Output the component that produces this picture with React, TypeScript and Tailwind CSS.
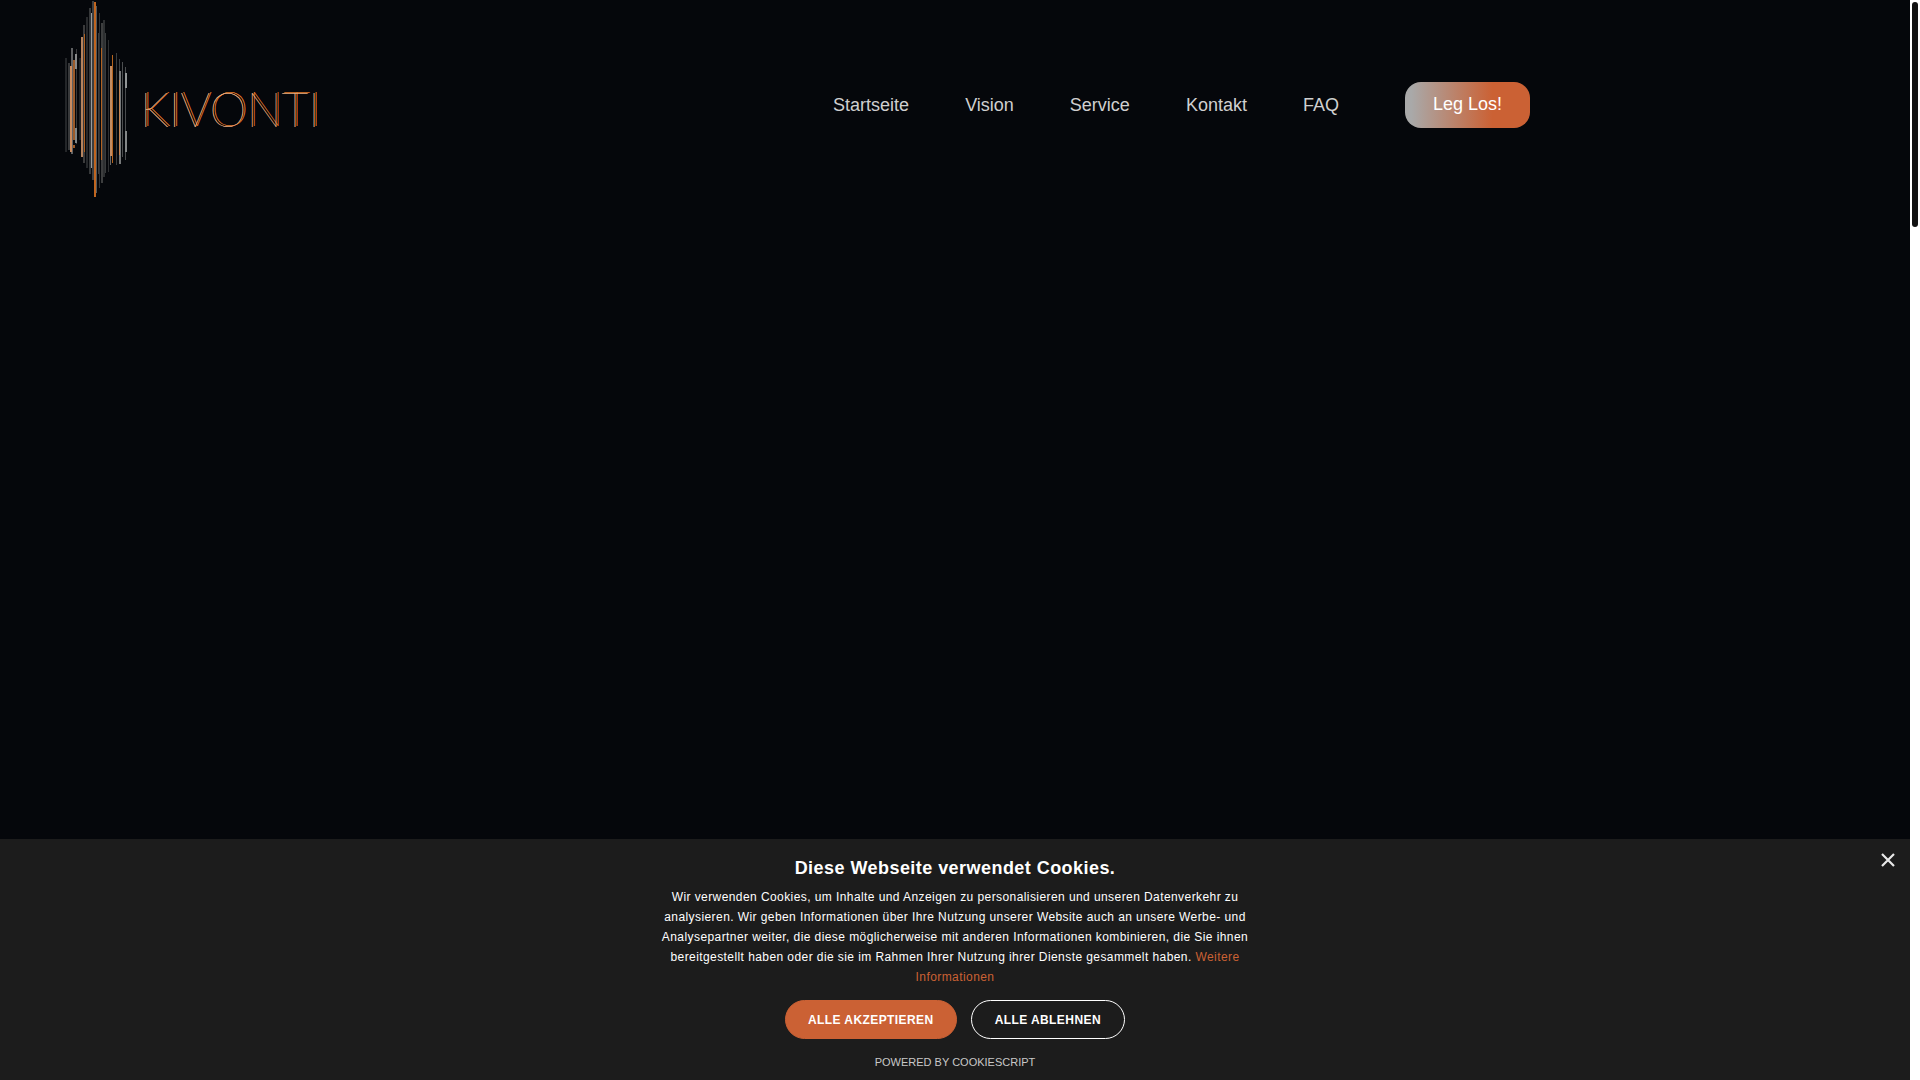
import React, { useState } from "react";

// x, top, bottom, width, color
const bars: [number, number, number, number, string][] = [
  [2, 58, 152, 2, "#242629"],
  [5, 63, 150, 2, "#38393b"],
  [8, 48, 154, 2, "#5f6062"],
  [7, 66, 152, 2, "#c88b60"],
  [10, 60, 140, 2, "#9c5b2a"],
  [10, 145, 148, 2, "#a05a24"],
  [13, 49, 144, 1, "#38393b"],
  [12, 54, 69, 2, "#88898a"],
  [12, 128, 143, 2, "#7f8587"],
  [16, 58, 140, 2, "#202225"],
  [20, 25, 163, 2, "#3b3b3c"],
  [18, 37, 157, 2, "#b5835e"],
  [21, 34, 152, 1, "#ad6020"],
  [23, 17, 168, 2, "#27292c"],
  [26, 8, 174, 2, "#36383a"],
  [28, 13, 168, 1, "#989b9c"],
  [29, 1, 180, 2, "#3c3e40"],
  [31, 2, 197, 2, "#c0651f"],
  [33, 6, 193, 1, "#55585a"],
  [36, 13, 188, 1, "#303234"],
  [35, 33, 174, 1, "#3b3d3f"],
  [38, 23, 183, 2, "#3d3e3f"],
  [38, 48, 160, 1, "#b26322"],
  [40, 20, 177, 2, "#2d2f31"],
  [42, 33, 173, 1, "#393b3c"],
  [45, 40, 172, 1, "#2d2f31"],
  [47, 66, 165, 1, "#68696a"],
  [47, 66, 156, 2, "#c28c63"],
  [49, 55, 163, 1, "#b5641f"],
  [53, 53, 165, 1, "#3a3c3e"],
  [56, 59, 155, 1, "#3d3f41"],
  [56, 71, 164, 2, "#77797a"],
  [56, 80, 155, 1, "#c58352"],
  [59, 62, 157, 1, "#4c4e50"],
  [62, 67, 160, 1, "#4a4c4e"],
  [62, 73, 88, 2, "#929596"],
  [62, 131, 152, 2, "#858889"],
];

const links = ["Startseite", "Vision", "Service", "Kontakt", "FAQ"];

const Logo: React.FC = () => {
  return (
    <a href="#" className="flex items-center gap-3">
      <svg className="w-16 h-50" viewBox="0 0 64 200" shapeRendering="crispEdges" aria-hidden="true">
        {bars.map(([x, top, bottom, width, color], i) => (
          <rect key={i} x={x - 1} y={top} width={width} height={bottom - top} fill={color} />
        ))}
      </svg>
      <span className="pt-[18px] font-['Lato',sans-serif] text-[47px] leading-none font-thin text-[#f0b48a] [text-shadow:0_0_0_#e0a072,2px_-1px_0_#e07a2a,2px_-1px_0_#e07a2a]">
        KIVONTI
      </span>
    </a>
  );
};

const Header: React.FC = () => {
  return (
    <header className="flex items-center justify-between pl-16 pr-[380px] h-50">
      <Logo />
      <nav className="flex items-center gap-14 pt-2.5 text-lg text-[#d0d0d0]">
        {links.map((link) => (
          <a key={link} href={`#${link.toLowerCase()}`} className="hover:text-white">
            {link}
          </a>
        ))}
        <button className="ml-2.5 px-7 pt-2 pb-2.5 rounded-2xl text-white bg-[linear-gradient(90deg,#a9a9a9_5%,#cb6134_70%)]">
          Leg Los!
        </button>
      </nav>
    </header>
  );
};

const CookieBanner: React.FC<{ onClose: () => void }> = ({ onClose }) => {
  return (
    <section className="relative mt-auto flex flex-col items-center px-6 pt-[15px] pb-2 bg-[#1c1c1c] text-center text-white">
      <button
        onClick={onClose}
        aria-label="Schließen"
        className="absolute top-3 right-[13px] p-0.5 text-[#e8e8e8]"
      >
        <svg className="size-[14px]" viewBox="0 0 14 14" stroke="currentColor" strokeWidth="2.2" aria-hidden="true">
          <path d="M1 1l12 12M13 1L1 13" />
        </svg>
      </button>
      <h2 className="text-lg leading-7 font-bold tracking-wide">Diese Webseite verwendet Cookies.</h2>
      <p className="mt-[5px] max-w-[600px] text-xs leading-5 tracking-[0.035em]">
        Wir verwenden Cookies, um Inhalte und Anzeigen zu personalisieren und unseren Datenverkehr zu
        analysieren. Wir geben Informationen über Ihre Nutzung unserer Website auch an unsere Werbe- und
        Analysepartner weiter, die diese möglicherweise mit anderen Informationen kombinieren, die Sie ihnen
        bereitgestellt haben oder die sie im Rahmen Ihrer Nutzung ihrer Dienste gesammelt haben.{" "}
        <a href="#datenschutz" className="text-[#cb6134]">
          Weitere Informationen
        </a>
      </p>
      <div className="mt-[13px] flex gap-3.5 text-xs font-bold tracking-[0.035em]">
        <button onClick={onClose} className="h-[39px] px-[22px] rounded-full border border-[#cb6134] bg-[#cb6134]">
          ALLE AKZEPTIEREN
        </button>
        <button onClick={onClose} className="h-[39px] px-[23px] rounded-full border border-white">
          ALLE ABLEHNEN
        </button>
      </div>
      <a href="#cookiescript" className="mt-[13px] text-[11px] leading-5 text-[#c8c8c8]">
        POWERED BY COOKIESCRIPT
      </a>
    </section>
  );
};

const App: React.FC = () => {
  const [showBanner, setShowBanner] = useState(true);

  return (
    <div className="flex min-h-screen bg-[#05070b] font-['Liberation_Sans',Arial,sans-serif]">
      <div className="flex flex-1 flex-col">
        <Header />
        {showBanner && <CookieBanner onClose={() => setShowBanner(false)} />}
      </div>
      <div className="w-2.5 p-0.5 bg-white">
        <div className="h-[225px] rounded-full bg-[#111111]" />
      </div>
    </div>
  );
};

export default App;
